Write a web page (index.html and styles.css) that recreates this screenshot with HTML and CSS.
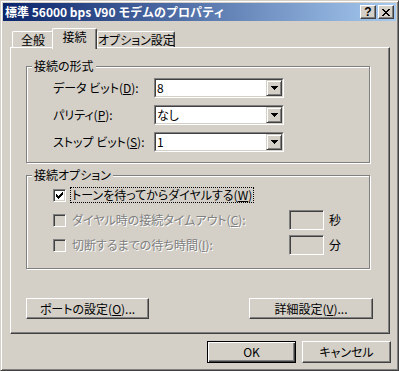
FILE: index.html
```html
<!DOCTYPE html>
<html lang="ja">
<head>
    <meta charset="UTF-8">
    <title>標準 56000 bps V90 モデムのプロパティ</title>
    <link rel="stylesheet" href="styles.css">
</head>
<body>
    <div class="window">
        <div class="titlebar">
            <span class="title">標準 56000 bps V90 モデムのプロパティ</span>
            <div class="title-buttons">
                <span class="tbtn help">?</span>
                <span class="tbtn close">
                    <svg width="8" height="7" viewBox="0 0 8 7" shape-rendering="crispEdges"><path d="M0 0h2v1h-2z M6 0h2v1h-2z M1 1h2v1h-2z M5 1h2v1h-2z M2 2h4v1h-4z M3 3h2v1h-2z M2 4h4v1h-4z M1 5h2v1h-2z M5 5h2v1h-2z M0 6h2v1h-2z M6 6h2v1h-2z" fill="#000"/></svg>
                </span>
            </div>
        </div>

        <div class="tabs">
            <div class="tab tab-general">全般</div>
            <div class="tab tab-active">接続</div>
            <div class="tab tab-options">オプション設定</div>
        </div>

        <div class="panel">
            <div class="group group-format">
                <div class="group-title">接続の形式</div>
                <div class="field-row">
                    <span class="field-label">データ ビット(<u>D</u>):</span>
                    <div class="combo"><div class="combo-inner"><span class="combo-value">8</span><span class="combo-btn"><svg width="7" height="4" viewBox="0 0 7 4" shape-rendering="crispEdges"><path d="M0 0h7v1h-1v1h-1v1h-1v1h-1v-1h-1v-1h-1v-1h-1z" fill="#000"/></svg></span></div></div>
                </div>
                <div class="field-row">
                    <span class="field-label">パリティ(<u>P</u>):</span>
                    <div class="combo"><div class="combo-inner"><span class="combo-value">なし</span><span class="combo-btn"><svg width="7" height="4" viewBox="0 0 7 4" shape-rendering="crispEdges"><path d="M0 0h7v1h-1v1h-1v1h-1v1h-1v-1h-1v-1h-1v-1h-1z" fill="#000"/></svg></span></div></div>
                </div>
                <div class="field-row">
                    <span class="field-label">ストップ ビット(<u>S</u>):</span>
                    <div class="combo"><div class="combo-inner"><span class="combo-value">1</span><span class="combo-btn"><svg width="7" height="4" viewBox="0 0 7 4" shape-rendering="crispEdges"><path d="M0 0h7v1h-1v1h-1v1h-1v1h-1v-1h-1v-1h-1v-1h-1z" fill="#000"/></svg></span></div></div>
                </div>
            </div>

            <div class="group group-options">
                <div class="group-title">接続オプション</div>
                <div class="check-row">
                    <span class="checkbox checked"><svg width="7" height="7" viewBox="0 0 7 7" shape-rendering="crispEdges"><path d="M6 0h1v3h-1v1h-1v1h-1v1h-1v1h-1v-1h-1v-1h-1v-3h1v1h1v1h1v-1h1v-1h1z" fill="#000"/></svg></span>
                    <span class="check-label focus">トーンを待ってからダイヤルする(<u>W</u>)</span>
                </div>
                <div class="check-row disabled">
                    <span class="checkbox"></span>
                    <span class="check-label">ダイヤル時の接続タイムアウト(<u>C</u>):</span>
                    <span class="edit"></span>
                    <span class="unit">秒</span>
                </div>
                <div class="check-row disabled">
                    <span class="checkbox"></span>
                    <span class="check-label">切断するまでの待ち時間(<u>I</u>):</span>
                    <span class="edit"></span>
                    <span class="unit">分</span>
                </div>
            </div>

            <div class="panel-buttons">
                <button class="btn btn-port">ポートの設定(<u>O</u>)...</button>
                <button class="btn btn-detail">詳細設定(<u>V</u>)...</button>
            </div>
        </div>

        <div class="dialog-buttons">
            <button class="btn btn-dialog btn-default">OK</button>
            <button class="btn btn-dialog">キャンセル</button>
        </div>
    </div>
</body>
</html>
```

FILE: styles.css
```css
body {
    margin: 0;
    background-color: #d4d0c8;
}

.window {
    width: 399px;
    height: 371px;
    box-sizing: border-box;
    border: 1px solid;
    border-color: #d4d0c8 #404040 #404040 #d4d0c8;
    box-shadow: inset 1px 1px #fff, inset -1px -1px #808080;
    padding: 2px;
    background-color: #d4d0c8;
    display: flex;
    flex-direction: column;
    font-family: "Noto Sans CJK JP", sans-serif;
    font-size: 12px;
    line-height: 14px;
    font-feature-settings: "palt" 1;
    color: #000;
}

.titlebar {
    height: 18px;
    display: flex;
    align-items: center;
    padding: 0 2px;
    background: linear-gradient(to right, #0a246a, #a6caf0);
}

.title {
    flex: 1;
    color: #fff;
    font-weight: bold;
    font-feature-settings: normal;
    white-space: nowrap;
}

.title-buttons {
    display: flex;
    gap: 2px;
}

.tbtn {
    width: 16px;
    height: 14px;
    box-sizing: border-box;
    border: 1px solid;
    border-color: #fff #404040 #404040 #fff;
    box-shadow: inset -1px -1px #808080;
    background-color: #d4d0c8;
    display: flex;
    align-items: center;
    justify-content: center;
}

.help {
    font-family: "Liberation Sans", sans-serif;
    font-weight: bold;
    font-size: 12px;
    line-height: 12px;
}

.tabs {
    display: flex;
    align-items: flex-end;
    height: 19px;
    margin: 7px 0 0 9px;
    position: relative;
    z-index: 1;
}

.tab {
    height: 16px;
    box-sizing: border-box;
    border: 1px solid;
    border-bottom: none;
    border-color: #fff #404040 #404040 #fff;
    box-shadow: inset -1px 0 #808080;
    border-radius: 2px 2px 0 0;
    background-color: #d4d0c8;
    line-height: 15px;
    text-align: center;
    white-space: nowrap;
}

.tab-general {
    width: 42px;
}

.tab-active {
    width: 45px;
    height: 21px;
    margin: 0 0 -2px -2px;
    line-height: 16px;
}

.tab-options {
    width: 78px;
}

.panel {
    width: 380px;
    height: 287px;
    box-sizing: border-box;
    margin-left: 7px;
    border: 1px solid;
    border-color: #fff #404040 #404040 #fff;
    box-shadow: inset -1px -1px #808080;
    padding: 18px 0 0 15px;
}

.group {
    width: 344px;
    box-sizing: border-box;
    border: 1px solid #808080;
    box-shadow: inset 1px 1px #fff, 1px 1px #fff;
}

.group-format {
    height: 97px;
}

.group-options {
    height: 94px;
    margin-top: 12px;
}

.group-title {
    width: fit-content;
    margin: -8px 0 0 5px;
    padding: 0 2px;
    background-color: #d4d0c8;
}

.field-row {
    display: flex;
    align-items: center;
    height: 20px;
    margin: 7px 0 0 26px;
}

.group-title + .field-row {
    margin-top: 5px;
}

.field-label {
    width: 101px;
    white-space: nowrap;
}

.combo {
    width: 130px;
    height: 20px;
    box-sizing: border-box;
    border: 1px solid;
    border-color: #808080 #fff #fff #808080;
}

.combo-inner {
    height: 100%;
    box-sizing: border-box;
    border: 1px solid;
    border-color: #404040 #d4d0c8 #d4d0c8 #404040;
    background-color: #fff;
    display: flex;
}

.combo-value {
    flex: 1;
    padding-left: 1px;
    line-height: 16px;
}

.combo-btn {
    width: 16px;
    box-sizing: border-box;
    border: 1px solid;
    border-color: #d4d0c8 #404040 #404040 #d4d0c8;
    box-shadow: inset 1px 1px #fff, inset -1px -1px #808080;
    background-color: #d4d0c8;
    display: flex;
    align-items: center;
    justify-content: center;
}

.check-row {
    display: flex;
    align-items: center;
    height: 20px;
    margin: 5px 0 0 26px;
}

.group-title + .check-row {
    margin-top: 3px;
}

.checkbox {
    width: 13px;
    height: 13px;
    box-sizing: border-box;
    border: 1px solid;
    border-color: #808080 #fff #fff #808080;
    box-shadow: inset 1px 1px #404040, inset -1px -1px #d4d0c8;
    background-color: #fff;
    display: flex;
    align-items: center;
    justify-content: center;
}

.disabled .checkbox {
    background-color: #d4d0c8;
}

.check-label {
    margin-left: 4px;
    padding: 0 1px;
    border: 1px solid transparent;
    white-space: nowrap;
}

.check-label.focus {
    border: 1px dotted #000;
}

.disabled .check-label {
    color: #808080;
    text-shadow: 1px 1px #fff;
}

.edit {
    width: 35px;
    height: 20px;
    box-sizing: border-box;
    margin-left: auto;
    border: 1px solid;
    border-color: #808080 #fff #fff #808080;
    box-shadow: inset 1px 1px #404040, inset -1px -1px #d4d0c8;
}

.unit {
    width: 12px;
    margin: 0 28px 0 5px;
}

.btn {
    box-sizing: border-box;
    padding: 0;
    border: 1px solid;
    border-color: #fff #404040 #404040 #fff;
    box-shadow: inset -1px -1px #808080;
    background-color: #d4d0c8;
    font-family: "Noto Sans CJK JP", sans-serif;
    font-size: 12px;
    line-height: 14px;
    font-feature-settings: "palt" 1;
    color: #000;
    text-align: center;
}

.panel-buttons {
    display: flex;
    justify-content: space-between;
    width: 347px;
    margin-top: 29px;
}

.btn-port {
    width: 123px;
    height: 21px;
}

.btn-detail {
    width: 124px;
    height: 21px;
}

.dialog-buttons {
    display: flex;
    justify-content: flex-end;
    gap: 6px;
    margin: 7px 5px 0 0;
}

.btn-dialog {
    width: 89px;
    height: 22px;
}

.btn-default {
    border: 1px solid #000;
    box-shadow: inset 1px 1px #fff, inset -1px -1px #404040, inset -2px -2px #808080;
}
```
